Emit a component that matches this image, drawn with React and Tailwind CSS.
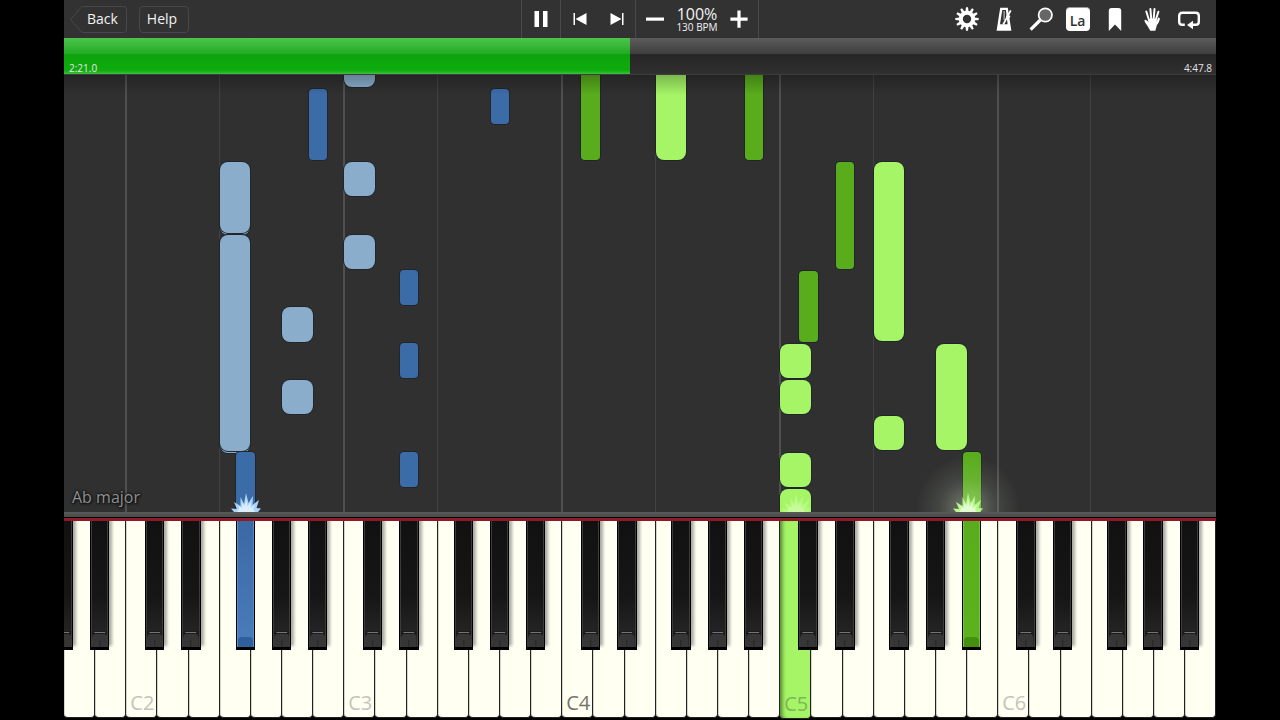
import { useState } from 'react';

const WHITE_KEYS = 37;
const FIRST_KEY = 5; // the keyboard starts on A1
const WHITE_NAMES = ['C', 'D', 'E', 'F', 'G', 'A', 'B'];
const WHITE_STEP = { C: 0, D: 1, E: 2, F: 3, G: 4, A: 5, B: 6 };
const BLACK_STEP = { 'C#': 0.59, 'D#': 1.76, 'F#': 3.51, 'G#': 4.67, 'A#': 5.83 };

const NOTES = [
    { key: 'C3', top: -22, height: 34, hand: 'left' },
    { key: 'C3', top: 87, height: 34, hand: 'left' },
    { key: 'C3', top: 160, height: 34, hand: 'left' },
    { key: 'A#2', top: 14, height: 71, hand: 'left' },
    { key: 'G#3', top: 14, height: 35, hand: 'left' },
    { key: 'F2', top: 87, height: 73, hand: 'left' },
    { key: 'F2', top: 87, height: 71, hand: 'left' },
    { key: 'F2', top: 160, height: 218, hand: 'left' },
    { key: 'F2', top: 160, height: 216, hand: 'left' },
    { key: 'A2', top: 232, height: 35, hand: 'left' },
    { key: 'A2', top: 305, height: 34, hand: 'left' },
    { key: 'D#3', top: 195, height: 35, hand: 'left' },
    { key: 'D#3', top: 268, height: 35, hand: 'left' },
    { key: 'D#3', top: 377, height: 35, hand: 'left' },
    { key: 'F#2', top: 377, height: 80, hand: 'left' },
    { key: 'C#4', top: -20, height: 105, hand: 'right' },
    { key: 'F4', top: -20, height: 105, hand: 'right' },
    { key: 'A#4', top: -20, height: 105, hand: 'right' },
    { key: 'D#5', top: 87, height: 107, hand: 'right' },
    { key: 'F5', top: 87, height: 179, hand: 'right' },
    { key: 'F5', top: 341, height: 34, hand: 'right' },
    { key: 'C#5', top: 196, height: 71, hand: 'right' },
    { key: 'C5', top: 269, height: 34, hand: 'right' },
    { key: 'C5', top: 305, height: 34, hand: 'right' },
    { key: 'C5', top: 378, height: 34, hand: 'right' },
    { key: 'C5', top: 414, height: 40, hand: 'right' },
    { key: 'A5', top: 269, height: 106, hand: 'right' },
    { key: 'A#5', top: 377, height: 80, hand: 'right' },
];

const NOTE_COLORS = {
    left: { white: 'rounded-lg bg-[#8aadcc]', black: 'rounded bg-[#3c6ca8]' },
    right: { white: 'rounded-lg bg-[#a5f566]', black: 'rounded bg-[#59ad1c]' },
};

const PRESSED = { 'F#2': 'left', C5: 'right', 'A#5': 'right' };

function percent(keys) {
    return `${(keys / WHITE_KEYS) * 100}%`;
}

function keyOffset(key) {
    const name = key.slice(0, -1);
    const octave = Number(key.slice(-1));
    const step = name.length === 2 ? BLACK_STEP[name] : WHITE_STEP[name];
    return (octave - 1) * 7 - FIRST_KEY + step;
}

function whiteKeyName(index) {
    const n = index + FIRST_KEY;
    return WHITE_NAMES[n % 7] + (Math.floor(n / 7) + 1);
}

const BLACK_KEYS = [1, 2, 3, 4, 5, 6]
    .flatMap((octave) => Object.keys(BLACK_STEP).map((name) => name + octave))
    .filter((key) => keyOffset(key) > -0.5);

/* ---------- icons ---------- */

function GearIcon() {
    const teeth = Array.from({ length: 12 }, (_, i) => i * 30);
    return (
        <svg className="size-6" viewBox="0 0 24 24" fill="none" stroke="#fff">
            <circle cx="12" cy="12" r="6.2" strokeWidth="4" />
            {teeth.map((angle) => (
                <path key={angle} d="M10.4 4.8 11 .3h2l.6 4.5z" fill="#fff" stroke="none" transform={`rotate(${angle} 12 12)`} />
            ))}
        </svg>
    );
}

function MetronomeIcon() {
    return (
        <svg className="size-6" viewBox="0 0 24 24" fill="none">
            <path d="M8.2.8h7.6L19.400 23.800H4.600z" fill="#fff" />
            <path d="M10.300 3h3.600l1.700 14.200H8z" fill="#333" />
            <path d="M11.200 17.500 18.800 3.400" stroke="#fff" strokeWidth="1.700" />
            <path d="M12.100 4v9" stroke="#fff" strokeWidth=".8" />
            <path d="M15.200 7.200l3.300 1.700-1.200 2.500-3.300-1.700z" fill="#fff" />
        </svg>
    );
}

function MagnifierIcon() {
    return (
        <svg className="size-6" viewBox="0 0 24 24" fill="none" stroke="#fff">
            <circle cx="16.300" cy="8" r="6.700" fill="#666" strokeWidth="1.700" />
            <path d="M11.300 13 1.600 22.600" strokeWidth="3.200" />
        </svg>
    );
}

function BookmarkIcon() {
    return (
        <svg className="size-6" viewBox="0 0 24 24" fill="#fff">
            <path d="M5.800 3.700Q5.800 1 8.500 1h7q2.700 0 2.700 2.700V24L12 17.500 5.800 24z" />
        </svg>
    );
}

function HandIcon() {
    return (
        <svg className="size-6" viewBox="0 0 24 24" fill="none" stroke="#fff" strokeLinecap="round" strokeWidth="2">
            <path d="M9.300 14 6.300 4.500M11.300 13 10.400 2M13.600 13l.9-11M15.400 14 18.400 4.800" />
            <path d="M15.600 17.500q2.200-1.400 3.200-5.800" strokeWidth="2.200" />
            <path d="M8.300 12.300q4-1.500 8 0l.8 3.400q-.4 4.400-1.800 8.100h-5Q8.300 20 5 15.200q-1.200-2.400.4-2.500 1.400.2 3.400 2.600z" fill="#fff" stroke="none" />
        </svg>
    );
}

function LoopIcon() {
    return (
        <svg className="size-6" viewBox="0 0 24 24" fill="none" stroke="#fff" strokeWidth="2.400">
            <path d="M7.800 17.800H5.300Q2.200 17.800 2.200 14.700V8.900Q2.200 5.800 5.300 5.800h13.400q3.100 0 3.100 3.100v5.800q0 3.100-3.100 3.100H15" />
            <path d="M10 18 16 13.800v8.400z" fill="#fff" stroke="none" />
        </svg>
    );
}

function ToolButton({ label, children }) {
    return (
        <button type="button" aria-label={label} className="flex h-full w-[37px] items-center justify-center">
            {children}
        </button>
    );
}

/* ---------- top bar ---------- */

function Toolbar() {
    const [playing, setPlaying] = useState(true);

    return (
        <header className="grid h-[38px] grid-cols-[1fr_auto_1fr] bg-[#323232] text-[#f2f2f2]">
            <div className="flex items-center gap-3 pl-1.5">
                <button type="button" className="relative h-[27px] w-[57px] pl-2 text-sm leading-5">
                    <svg className="absolute inset-0 size-full" viewBox="0 0 57 27" fill="none" stroke="#484848">
                        <path d="M.7 13.5 10 2.5Q11.5.5 13.5.5H53.5Q56.5.5 56.5 3.5V23.5Q56.5 26.5 53.5 26.5H13.5Q11.5 26.5 10 24.5z" />
                    </svg>
                    <span className="relative">Back</span>
                </button>
                <button type="button" className="h-[27px] w-[50px] rounded border border-[#484848] pr-1 text-sm leading-5">
                    Help
                </button>
            </div>

            <div className="flex divide-x divide-[#4a4a4a] border-x border-[#4a4a4a]">
                <button type="button" aria-label="Pause" onClick={() => setPlaying(!playing)} className="flex w-[39px] items-center justify-center">
                    <svg className="size-5" viewBox="0 0 20 20" fill="#fff">
                        {playing ? <path d="M3.500 2h4.500v16H3.500zM12 2h4.500v16H12z" /> : <path d="M4 2l14 8-14 8z" />}
                    </svg>
                </button>
                <div className="flex">
                    <ToolButton label="Previous">
                        <svg className="size-4" viewBox="0 0 16 16" fill="#fff">
                            <path d="M1.500 2h1.500v12H1.500zM14.500 2v12L3.500 8z" />
                        </svg>
                    </ToolButton>
                    <ToolButton label="Next">
                        <svg className="size-4" viewBox="0 0 16 16" fill="#fff">
                            <path d="M13 2h1.500v12H13zM1.500 2v12l11-6z" />
                        </svg>
                    </ToolButton>
                </div>
                <div className="flex w-[122px] items-center justify-between px-2.5">
                    <button type="button" aria-label="Slower">
                        <svg className="size-[18px]" viewBox="0 0 18 18" fill="#fff">
                            <path d="M0 7.500h18v3.200H0z" />
                        </svg>
                    </button>
                    <div className="text-center">
                        <div className="text-base leading-4">100%</div>
                        <div className="text-[10px] leading-2.5">130 BPM</div>
                    </div>
                    <button type="button" aria-label="Faster">
                        <svg className="size-[18px]" viewBox="0 0 18 18" fill="#fff">
                            <path d="M7.400 0.500h3.200v7h7v3.200h-7v7H7.400v-7h-7V7.500h7z" />
                        </svg>
                    </button>
                </div>
            </div>

            <div className="flex justify-end pr-[9px]">
                <ToolButton label="Settings"><GearIcon /></ToolButton>
                <ToolButton label="Metronome"><MetronomeIcon /></ToolButton>
                <ToolButton label="Zoom"><MagnifierIcon /></ToolButton>
                <ToolButton label="Note labels">
                    <span className="flex size-6 items-end justify-center rounded-sm border-t border-[#999] bg-white text-sm font-semibold text-[#333]">La</span>
                </ToolButton>
                <ToolButton label="Bookmark"><BookmarkIcon /></ToolButton>
                <ToolButton label="Hands"><HandIcon /></ToolButton>
                <ToolButton label="Loop"><LoopIcon /></ToolButton>
            </div>
        </header>
    );
}

function ProgressBar() {
    const progress = 49.15;

    return (
        <div
            role="progressbar"
            aria-label="Song position"
            aria-valuenow={progress}
            className="relative h-[37px] border-b border-[#3c3c3c] bg-[linear-gradient(#5c5c5c,#3e3e3e_45%,#252525_46%,#303030)]"
        >
            <div
                className="h-full bg-[linear-gradient(#4cc44c,#22aa22_45%,#0ba50b_46%,#0eab0e_90%,#3fbf3f)]"
                style={{ width: `${progress}%` }}
            />
            <div className="absolute inset-x-0 bottom-0 flex justify-between pr-1 pl-[5px] text-[10px] leading-3 text-[#e4e4e4]">
                <span>2:21.0</span>
                <span>4:47.8</span>
            </div>
        </div>
    );
}

/* ---------- falling notes ---------- */

function GridLines() {
    return [0, 1, 2, 3, 4].map((octave) => (
        <div key={octave}>
            <div className="absolute inset-y-0 -ml-px w-0.5 bg-[#505050]" style={{ left: percent(2 + octave * 7) }} />
            <div className="absolute inset-y-0 -ml-px w-px bg-[#424242]" style={{ left: percent(5 + octave * 7) }} />
        </div>
    ));
}

function Note({ note }) {
    const isBlack = note.key.includes('#');
    const color = NOTE_COLORS[note.hand][isBlack ? 'black' : 'white'];

    return (
        <div
            className={`absolute shadow-[0_0_0_1px_#20262c] ${color}`}
            style={{
                left: percent(keyOffset(note.key) + (isBlack ? 0.03 : 0)),
                top: note.top,
                width: percent(isBlack ? 0.59 : 0.99),
                height: note.height,
            }}
        />
    );
}

function Spark({ keyPos, glowClass, sparkClass }) {
    return (
        <div className="absolute bottom-0 w-10 -translate-x-1/2" style={{ left: percent(keyPos) }}>
            {glowClass && <div className={`absolute -inset-x-8 -top-8 -bottom-12 ${glowClass}`} />}
            <svg className={`relative block h-6 w-10 ${sparkClass}`} viewBox="0 0 40 24" fill="currentColor">
                <path d="M8 24 5 20.500 11 21 8 14 14.500 18 14.500 9 18 16 20 5 22.500 15 27 8 26.500 17 33 12 30.500 20 35 20.500 32 24z" />
                <path fill="#fff" opacity="0.6" d="M11 24 13 21 12.500 18 16 20 16.500 14 19 18.500 20 10 21.500 18.500 25 14 24.500 20 29 17 27 21 29 24z" />
            </svg>
        </div>
    );
}

function NoteRoll() {
    return (
        <section aria-label="Notes" className="relative min-h-0 flex-1 overflow-hidden bg-[#303030]">
            <GridLines />
            {NOTES.map((note, i) => (
                <Note key={i} note={note} />
            ))}
            <Spark keyPos={5.83} sparkClass="text-[#a8d4fa]" />
            <Spark keyPos={23.5} sparkClass="text-[#c4ff94] opacity-50" />
            <Spark
                keyPos={29.03}
                sparkClass="text-[#b9f88c]"
                glowClass="bg-[radial-gradient(closest-side,#e8ffd860,#d0e0c020_55%,transparent)]"
            />
            <div className="absolute inset-x-0 top-0 h-5 bg-linear-to-b from-black/25 to-transparent" />
            <p className="absolute bottom-[3px] left-2 text-base text-[#909090] [text-shadow:0_0_2px_#111,0_0_3px_#111,1px_1px_2px_#111]">
                Ab major
            </p>
        </section>
    );
}

/* ---------- keyboard ---------- */

function WhiteKey({ name }) {
    const pressed = PRESSED[name];
    const isC = name[0] === 'C';
    let labelColor = 'text-[#c4c4ba]';
    if (name === 'C4') labelColor = 'text-[#74746c]';
    if (pressed) labelColor = 'text-[#7fb658]';

    return (
        <button
            type="button"
            aria-label={name}
            className={`flex min-w-0 flex-1 items-end rounded-b border-r border-b border-[#222] pb-1 pl-1 ${
                pressed
                    ? 'h-[198px] bg-[#a5f566] shadow-[inset_5px_0_4px_-3px_#4d7a2c]'
                    : 'h-[197px] bg-[#fffff2] shadow-[inset_1px_0_0_#d5d5ca]'
            }`}
        >
            {isC && <span className={`text-xl leading-5 ${labelColor}`}>{name}</span>}
        </button>
    );
}

const BLACK_KEY_BODY = {
    left: 'border-[#5b8cc8] bg-linear-to-b from-[#3a69a5] to-[#4a7dbb]',
    right: 'border-[#74c23c] bg-linear-to-b from-[#59ad1c] to-[#5cb31e]',
    none: 'border-[#3c3c3c] bg-[linear-gradient(#111,#161616_60%,#2a2a2a)]',
};

function BlackKey({ name }) {
    const pressed = PRESSED[name];
    const body = BLACK_KEY_BODY[pressed || 'none'];

    return (
        <button
            type="button"
            aria-label={name}
            className={`absolute top-0 flex h-[129px] bg-black px-px pb-[3px] ${pressed ? '' : 'shadow-[3px_-4px_3px_#0005]'}`}
            style={{ left: percent(keyOffset(name)), width: percent(0.63) }}
        >
            <span className={`flex h-full w-full items-end border-x ${body}`}>
                {pressed ? (
                    <span className={`h-2.5 w-full rounded-t ${pressed === 'left' ? 'bg-[#2f5f9c]' : 'bg-[#43910f]'}`} />
                ) : (
                    <svg className="h-4 w-full" viewBox="0 0 16 16" preserveAspectRatio="none" fill="none">
                        <path d="M0 0h16v16H0z" fill="#1c1c1c" />
                        <path d="M0 16V7Q1 3 3 3h10q2 0 3 4v9z" fill="#363636" />
                        <path d="M2.500 1.500h11" stroke="#777" />
                        <path d="M8 9v7" stroke="#262626" />
                    </svg>
                )}
            </span>
        </button>
    );
}

function Keyboard() {
    return (
        <section aria-label="Keyboard" className="bg-black">
            <div className="h-[5px] bg-linear-to-b from-[#5c5c5c] to-[#484848]" />
            <div className="mt-px h-[3px] bg-[#8c1a28]" />
            <div className="relative h-[199px] overflow-hidden">
                <div className="flex items-start">
                    {Array.from({ length: WHITE_KEYS }, (_, i) => (
                        <WhiteKey key={i} name={whiteKeyName(i)} />
                    ))}
                </div>
                {BLACK_KEYS.map((name) => (
                    <BlackKey key={name} name={name} />
                ))}
            </div>
        </section>
    );
}

function App() {
    return (
        <div className="h-screen bg-black font-['Open_Sans',sans-serif]">
            <main className="mx-auto flex h-full w-[90%] flex-col">
                <Toolbar />
                <ProgressBar />
                <NoteRoll />
                <Keyboard />
            </main>
        </div>
    );
}

export default App;
